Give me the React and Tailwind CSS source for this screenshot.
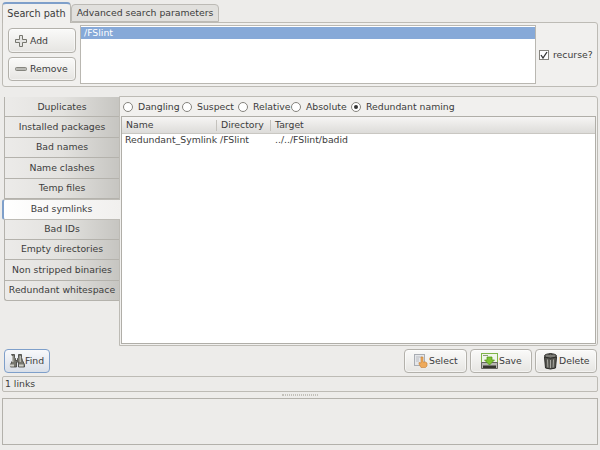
const SIDE_TABS = [
  "Duplicates",
  "Installed packages",
  "Bad names",
  "Name clashes",
  "Temp files",
  "Bad symlinks",
  "Bad IDs",
  "Empty directories",
  "Non stripped binaries",
  "Redundant whitespace",
];

const RADIOS = [
  { label: "Dangling", w: "w-[59px]" },
  { label: "Suspect", w: "w-[56px]" },
  { label: "Relative", w: "w-[53px]" },
  { label: "Absolute", w: "w-[60px]" },
  { label: "Redundant naming", w: "w-[110px]", checked: true },
];

const BTN =
  "flex items-center border border-[#b3b1ab] rounded-[4px] bg-gradient-to-b from-[#fafaf9] to-[#e6e5e2] shadow-[inset_0_0_0_1px_#ffffff80] whitespace-nowrap";

function PlusIcon() {
  return (
    <svg width="14" height="14" viewBox="0 0 14 14">
      <path d="M5.500 1.500h3v4h4v3h-4v4h-3v-4h-4v-3h4z" fill="#e4e4e2" stroke="#77776f" />
    </svg>
  );
}

function MinusIcon() {
  return (
    <svg width="14" height="14" viewBox="0 0 14 14">
      <rect x="1.500" y="5.500" width="11" height="3" rx="1" fill="#b9b9b4" stroke="#85857e" />
    </svg>
  );
}

function BinocularsIcon() {
  return (
    <svg width="17" height="14" viewBox="0 0 17 14">
      <path d="M3.500 0.500h3v3l1 1v2h2v-2l1-1v-3h3v3l1 3 2 4v2.500h-6v-5h-2v5h-6V10.500l2-4 1-3z" fill="#77776f" stroke="#3e3e3a" strokeWidth="0.800" />
      <rect x="1.500" y="10.500" width="4.500" height="2" fill="#cfcfc8" />
      <rect x="11" y="10.500" width="4.500" height="2" fill="#cfcfc8" />
      <rect x="4" y="2" width="1.500" height="6" fill="#b8b8b1" />
      <rect x="11.500" y="2" width="1.500" height="6" fill="#b8b8b1" />
    </svg>
  );
}

function SelectIcon() {
  return (
    <svg width="14" height="16" viewBox="0 0 14 16">
      <rect x="0.500" y="1.500" width="10" height="11" fill="#e5e7ea" stroke="#a9adb3" />
      <path d="M2 4h6M2 6h3M2 8h3" stroke="#b9bcc2" />
      <path d="M7 4h2v5h2.500l1.500 1v3l-1.500 1.500H7L5 11V9.500l2 .5z" fill="#eeaa5b" stroke="#c47f35" strokeWidth="0.600" />
    </svg>
  );
}

function SaveIcon() {
  return (
    <svg width="18" height="17" viewBox="0 0 18 17">
      <rect x="0.500" y="0.500" width="16" height="9" fill="#f1f6ea" stroke="#7fb548" />
      <path d="M2 2.500h5" stroke="#8d9a7d" />
      <path d="M0.500 9.500h16v6h-16z" fill="#b9b9b3" stroke="#65655f" />
      <rect x="2" y="12.500" width="13" height="2.500" fill="#36362f" />
      <path d="M6 4h5v3h2.500L8.500 12 3.500 7H6z" fill="#7dc331" stroke="#4f8f18" strokeWidth="0.700" />
    </svg>
  );
}

function TrashIcon() {
  return (
    <svg width="15" height="17" viewBox="0 0 15 17">
      <ellipse cx="7.500" cy="3" rx="6" ry="2.300" fill="#7c7c76" stroke="#2f2f2c" />
      <path d="M5.500 1.500q2-1.500 4 0" fill="none" stroke="#2f2f2c" />
      <path d="M1.500 4q6 2.500 12 0l-1 11q-5 2-10 0z" fill="#55554f" stroke="#2b2b28" />
      <path d="M4.500 6.500l.4 8M7.500 7v8M10.500 6.500l-.4 8" stroke="#a9a9a2" />
    </svg>
  );
}

function Radio({ label, w, checked }) {
  return (
    <div className={`flex items-center shrink-0 whitespace-nowrap ${w}`}>
      <span className="flex items-center justify-center w-[10px] h-[10px] rounded-full border border-[#85837d] bg-white mr-[5px]">
        {checked && <span className="w-[4px] h-[4px] rounded-full bg-[#333]" />}
      </span>
      {label}
    </div>
  );
}

export default function App() {
  return (
    <div
      className="w-[600px] h-[450px] overflow-hidden bg-[#edecea] text-[#3c3c3c] text-[9.300px] leading-[12px] flex flex-col"
      style={{ fontFamily: '"DejaVu Sans", sans-serif' }}
    >
      {/* top tabs */}
      <div className="h-[22px] pl-[2px] pt-[2px] flex items-end shrink-0">
        <div className="relative z-10 w-[69px] h-[21px] -mb-[1px] bg-[#f1f0ee] border border-[#b9b7b1] border-b-0 border-t-[#7e9fca] border-t-2 rounded-t-[4px] flex items-center justify-center text-[9.700px] whitespace-nowrap">
          Search path
        </div>
        <div className="w-[148px] h-[18px] bg-[#e1e0dd] border border-[#bcbab5] rounded-t-[4px] flex items-center justify-center whitespace-nowrap">
          Advanced search parameters
        </div>
      </div>

      {/* search path panel */}
      <div className="mx-[2px] w-[596px] h-[65px] shrink-0 bg-[#f1f0ee] border border-[#bdbbb5] rounded-b-[3px] rounded-tr-[3px] flex pl-[5px] pt-[2px]">
        <div className="w-[68px] flex flex-col pt-[3px] gap-[4px] shrink-0">
          <button className={`${BTN} h-[25px] pl-[5px] gap-[2px]`}>
            <PlusIcon />
            Add
          </button>
          <button className={`${BTN} h-[24px] pl-[5px] gap-[2px]`}>
            <MinusIcon />
            Remove
          </button>
        </div>
        <div className="ml-[4px] w-[456px] h-[59px] shrink-0 bg-white border border-[#b9b7b1] pt-[1px]">
          <div className="h-[12px] bg-[#86a9d8] text-white pl-[3px] flex items-center">
            /FSlint
          </div>
        </div>
        <div className="ml-[3px] flex items-center h-[59px] whitespace-nowrap">
          <span className="w-[10px] h-[10px] border border-[#85837d] bg-white mr-[4px] flex items-center justify-center shrink-0">
            <svg width="8" height="8" viewBox="0 0 8 8">
              <path d="M1 4l2 3 4-6" fill="none" stroke="#333" strokeWidth="1.300" />
            </svg>
          </span>
          recurse?
        </div>
      </div>

      {/* main notebook */}
      <div className="flex mt-[9px] h-[250px] shrink-0">
        <div className="w-[119px] shrink-0 pl-[2px] flex flex-col pt-[1px]">
          {SIDE_TABS.map((t) => {
            const active = t === "Bad symlinks";
            return (
              <div
                key={t}
                className={
                  active
                    ? "relative z-10 w-[118px] h-[21px] -my-[0.300px] bg-gradient-to-r from-white to-[#f1f0ee] border-l-2 border-y border-l-[#7e9fca] border-y-[#bdbbb5] rounded-l-[3px] flex items-center justify-center pr-[1px]"
                    : "ml-[2px] h-[20.400px] bg-gradient-to-r from-[#ecebe9] via-[#e3e2df] to-[#c6c5c1] border-l border-b border-[#b4b2ac] last:rounded-bl-[3px] flex items-center justify-center whitespace-nowrap"
                }
              >
                {t}
              </div>
            );
          })}
        </div>
        <div className="w-[479px] shrink-0 bg-[#f1f0ee] border border-[#bdbbb5] rounded-r-[3px] flex flex-col pl-[1px] pr-[1px]">
          <div className="h-[19px] shrink-0 flex items-center pl-[2px]">
            {RADIOS.map((r) => (
              <Radio key={r.label} {...r} />
            ))}
          </div>
          <div className="flex-1 bg-white border border-[#b0aea8] mb-[1px] flex flex-col">
            <div className="h-[17px] shrink-0 flex items-center bg-gradient-to-b from-[#f6f5f4] to-[#dddcd9] border-b border-[#c9c7c2]">
              <div className="w-[95px] pl-[4px] border-r border-[#c4c2bd] h-[11px] flex items-center">Name</div>
              <div className="w-[54px] pl-[4px] border-r border-[#c4c2bd] h-[11px] flex items-center">Directory</div>
              <div className="pl-[4px]">Target</div>
            </div>
            <div className="flex h-[12px] items-center">
              <div className="w-[95px] pl-[3px] shrink-0 whitespace-nowrap">Redundant_Symlink</div>
              <div className="w-[54px] pl-[3px] shrink-0">/FSlint</div>
              <div className="pl-[4px]">../../FSlint/badid</div>
            </div>
          </div>
        </div>
      </div>

      {/* buttons */}
      <div className="flex items-center mt-[3px] h-[24px] shrink-0">
        <button className="ml-[4px] w-[46px] h-[24px] flex items-center pl-[3px] border border-[#7e9fca] rounded-[4px] bg-gradient-to-b from-[#f8f9fb] to-[#d9dfe8]">
          <BinocularsIcon />
          Find
        </button>
        <button className={`${BTN} ml-[354px] w-[63px] h-[24px] pl-[9px] gap-[1px]`}>
          <SelectIcon />
          Select
        </button>
        <button className={`${BTN} ml-[3px] w-[62px] h-[24px] pl-[10px] gap-[0px]`}>
          <SaveIcon />
          Save
        </button>
        <button className={`${BTN} ml-[3px] w-[62px] h-[24px] pl-[7px] gap-[1px]`}>
          <TrashIcon />
          Delete
        </button>
      </div>

      {/* status bar */}
      <div className="ml-[2px] mt-[3px] w-[596px] h-[16px] shrink-0 border border-[#bdbbb5] rounded-[2px] bg-[#ecebe9] pl-[2px] flex items-center">
        1 links
      </div>

      {/* pane handle */}
      <div className="h-[6px] shrink-0 flex items-center justify-center">
        <div className="w-[36px] h-[2px] border-y border-dotted border-[#c3c1bb]" />
      </div>

      {/* output pane */}
      <div className="ml-[2px] w-[596px] h-[47px] shrink-0 border border-[#b3b1ab] bg-[#edecea]" />
    </div>
  );
}
